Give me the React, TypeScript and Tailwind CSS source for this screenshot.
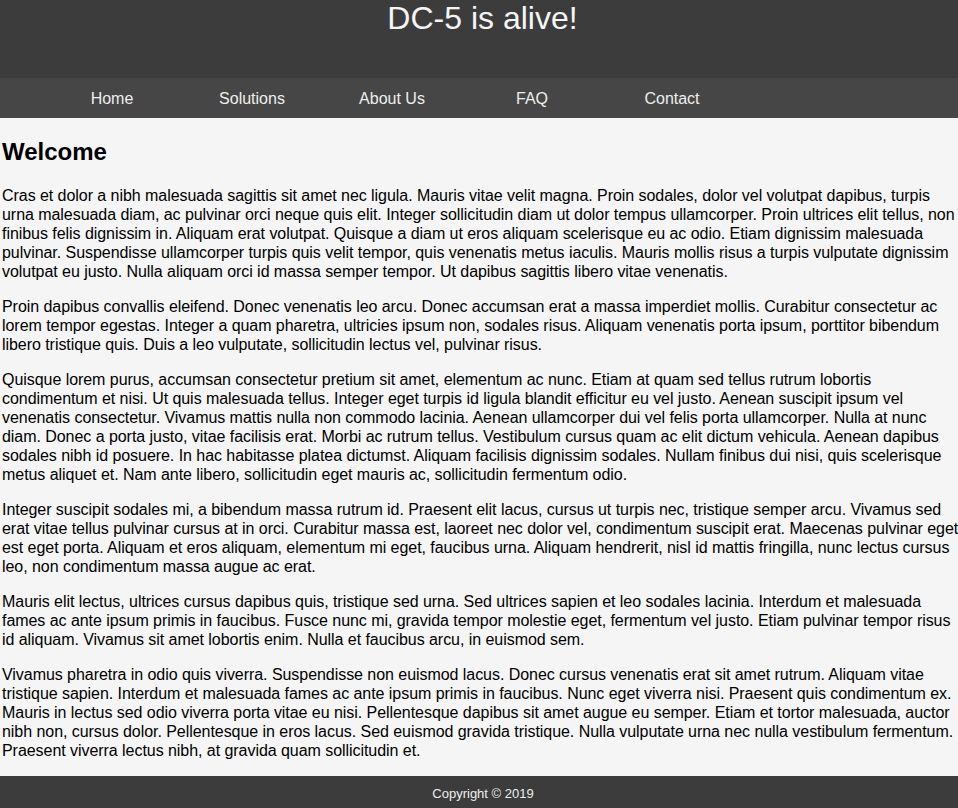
import React from "react";

const paras = [
  "Cras et dolor a nibh malesuada sagittis sit amet nec ligula. Mauris vitae velit magna. Proin sodales, dolor vel volutpat dapibus, turpis urna malesuada diam, ac pulvinar orci neque quis elit. Integer sollicitudin diam ut dolor tempus ullamcorper. Proin ultrices elit tellus, non finibus felis dignissim in. Aliquam erat volutpat. Quisque a diam ut eros aliquam scelerisque eu ac odio. Etiam dignissim malesuada pulvinar. Suspendisse ullamcorper turpis quis velit tempor, quis venenatis metus iaculis. Mauris mollis risus a turpis vulputate dignissim volutpat eu justo. Nulla aliquam orci id massa semper tempor. Ut dapibus sagittis libero vitae venenatis.",
  "Proin dapibus convallis eleifend. Donec venenatis leo arcu. Donec accumsan erat a massa imperdiet mollis. Curabitur consectetur ac lorem tempor egestas. Integer a quam pharetra, ultricies ipsum non, sodales risus. Aliquam venenatis porta ipsum, porttitor bibendum libero tristique quis. Duis a leo vulputate, sollicitudin lectus vel, pulvinar risus.",
  "Quisque lorem purus, accumsan consectetur pretium sit amet, elementum ac nunc. Etiam at quam sed tellus rutrum lobortis condimentum et nisi. Ut quis malesuada tellus. Integer eget turpis id ligula blandit efficitur eu vel justo. Aenean suscipit ipsum vel venenatis consectetur. Vivamus mattis nulla non commodo lacinia. Aenean ullamcorper dui vel felis porta ullamcorper. Nulla at nunc diam. Donec a porta justo, vitae facilisis erat. Morbi ac rutrum tellus. Vestibulum cursus quam ac elit dictum vehicula. Aenean dapibus sodales nibh id posuere. In hac habitasse platea dictumst. Aliquam facilisis dignissim sodales. Nullam finibus dui nisi, quis scelerisque metus aliquet et. Nam ante libero, sollicitudin eget mauris ac, sollicitudin fermentum odio.",
  "Integer suscipit sodales mi, a bibendum massa rutrum id. Praesent elit lacus, cursus ut turpis nec, tristique semper arcu. Vivamus sed erat vitae tellus pulvinar cursus at in orci. Curabitur massa est, laoreet nec dolor vel, condimentum suscipit erat. Maecenas pulvinar eget est eget porta. Aliquam et eros aliquam, elementum mi eget, faucibus urna. Aliquam hendrerit, nisl id mattis fringilla, nunc lectus cursus leo, non condimentum massa augue ac erat.",
  "Mauris elit lectus, ultrices cursus dapibus quis, tristique sed urna. Sed ultrices sapien et leo sodales lacinia. Interdum et malesuada fames ac ante ipsum primis in faucibus. Fusce nunc mi, gravida tempor molestie eget, fermentum vel justo. Etiam pulvinar tempor risus id aliquam. Vivamus sit amet lobortis enim. Nulla et faucibus arcu, in euismod sem.",
  "Vivamus pharetra in odio quis viverra. Suspendisse non euismod lacus. Donec cursus venenatis erat sit amet rutrum. Aliquam vitae tristique sapien. Interdum et malesuada fames ac ante ipsum primis in faucibus. Nunc eget viverra nisi. Praesent quis condimentum ex. Mauris in lectus sed odio viverra porta vitae eu nisi. Pellentesque dapibus sit amet augue eu semper. Etiam et tortor malesuada, auctor nibh non, cursus dolor. Pellentesque in eros lacus. Sed euismod gravida tristique. Nulla vulputate urna nec nulla vestibulum fermentum. Praesent viverra lectus nibh, at gravida quam sollicitudin et.",
];

const nav = ["Home", "Solutions", "About Us", "FAQ", "Contact"];

export default function App() {
  return (
    <div className="w-[958px] min-h-[808px] bg-[#f5f5f5] flex flex-col overflow-hidden" style={{ fontFamily: '"Liberation Sans", Arial, sans-serif' }}>
      <header className="h-[78px] bg-[#3c3c3c] text-center">
        <h1 className="text-[32px] leading-[37px] font-normal text-[#f5f5f5] pl-[7px]">DC-5 is alive!</h1>
      </header>
      <nav className="h-[40px] bg-[#464646] flex items-center pl-[42px]">
        {nav.map((n) => (
          <a key={n} className="w-[140px] text-center text-[16px] leading-[19px] text-[#eeeeee]">{n}</a>
        ))}
      </nav>
      <main className="pt-5 pl-[2px] text-black">
        <h2 className="text-[24px] leading-[28px] font-bold mb-5">Welcome</h2>
        {paras.map((p, i) => (
          <p key={i} className="text-[16px] leading-[19px] mb-4 mr-[-6px] tracking-[-0.05px]">{p}</p>
        ))}
      </main>
      <footer className="h-[32px] bg-[#3c3c3c] flex items-center justify-center pt-[3px] pl-[8px] text-[13px] text-[#eeeeee]">
        Copyright © 2019
      </footer>
    </div>
  );
}
